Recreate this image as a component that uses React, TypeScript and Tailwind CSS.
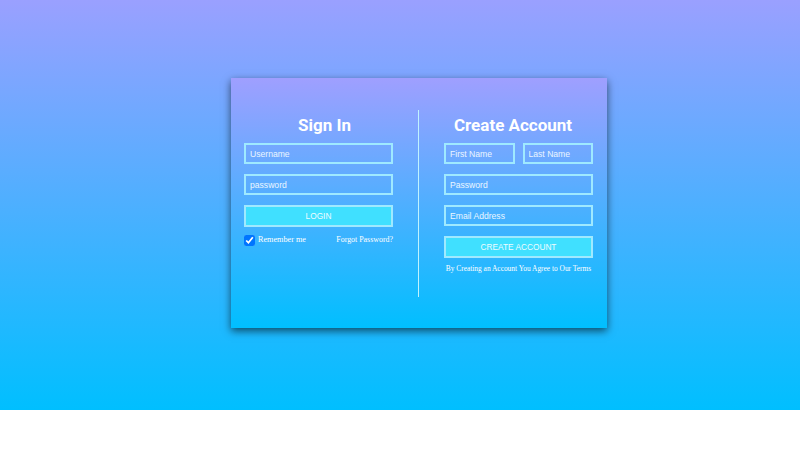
import React from "react";

const field =
  "h-[21px] w-full border-2 border-[#9fe9ff] bg-transparent pl-[4px] text-[8.6px] text-white placeholder:text-[#eaf6ff] outline-none font-['Liberation_Sans',Arial,sans-serif]";

const button =
  "h-[22px] w-full border-2 border-[#9fe9ff] bg-[#40e0ff] text-[8.3px] text-[#eefcff] font-['Liberation_Sans',Arial,sans-serif]";

const title =
  "mt-[5px] mb-[8px] text-center text-[17px] leading-[20px] font-bold text-white font-['Roboto',sans-serif]";

export default function App() {
  return (
    <div className="min-h-[450px] bg-white">
      <div className="h-[410px] bg-[linear-gradient(to_bottom,#9aa0ff,#00bfff)] pt-[78px] pl-[231px]">
        <div className="flex w-[376px] h-[250px] bg-[linear-gradient(to_bottom,#9f9fff,#00bfff)] pt-[32px] pb-[31px] shadow-[0_3px_8px_rgba(0,0,0,0.6)]">
          <div className="w-[188px] flex flex-col border-r border-[#bff3ff]">
            <h2 className={title}>Sign In</h2>
            <div className="ml-[13px] w-[149px] flex flex-col">
              <div className="flex flex-col gap-[10px]">
                <input className={field} placeholder="Username" />
                <input className={field} placeholder="password" type="password" />
                <button className={button}>LOGIN</button>
              </div>
              <div className="mt-[7px] flex items-center justify-between font-['Liberation_Serif',serif] text-white">
                <label className="flex items-center gap-[3px] text-[8.2px]">
                  <input type="checkbox" defaultChecked className="m-0 w-[11px] h-[11px]" />
                  Remember me
                </label>
                <a className="text-[7.9px]">Forgot Password?</a>
              </div>
            </div>
          </div>

          <div className="w-[188px] flex flex-col">
            <h2 className={title}>Create Account</h2>
            <div className="ml-[25px] w-[149px] flex flex-col">
              <div className="flex flex-col gap-[10px]">
                <div className="flex gap-[8px]">
                  <input className={field} placeholder="First Name" />
                  <input className={field} placeholder="Last Name" />
                </div>
                <input className={field} placeholder="Password" type="password" />
                <input className={field} placeholder="Email Address" />
                <button className={button}>CREATE ACCOUNT</button>
              </div>
              <p className="mt-[5px] text-center text-[7.4px] text-white font-['Liberation_Serif',serif]">
                By Creating an Account You Agree to Our Terms
              </p>
            </div>
          </div>
        </div>
      </div>
    </div>
  );
}
